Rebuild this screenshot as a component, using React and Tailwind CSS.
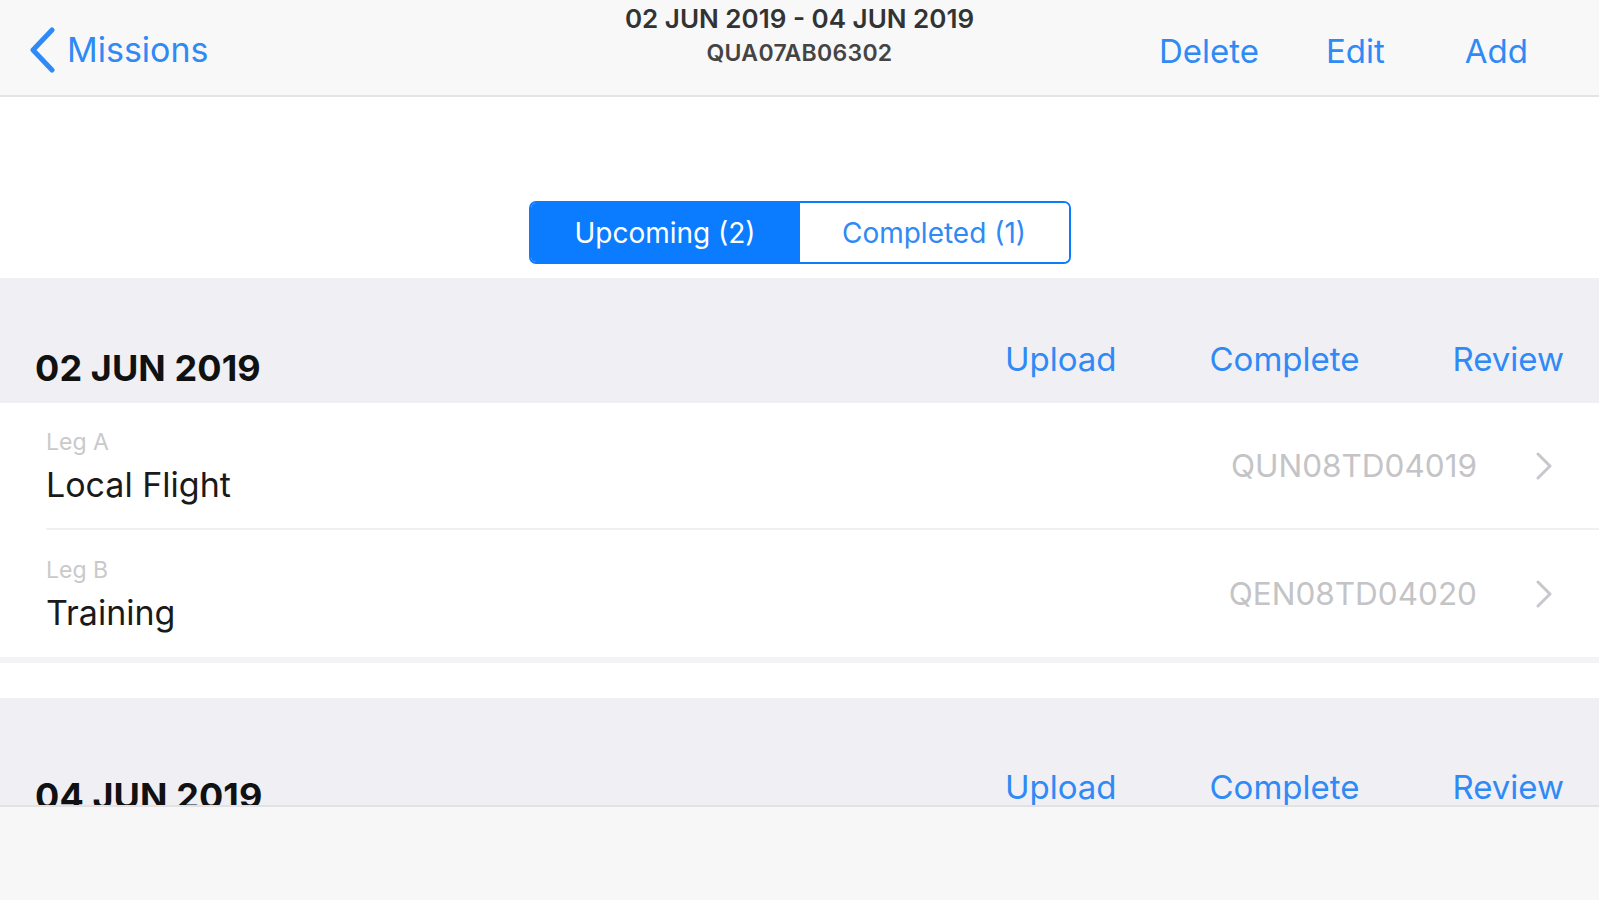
const legs = [
  { leg: "Leg A", name: "Local Flight", code: "QUN08TD04019" },
  { leg: "Leg B", name: "Training", code: "QEN08TD04020" },
];

const SectionHeader = ({ date }) => (
  <div className="h-[125px] bg-[#efeff4] flex items-end justify-between pl-[35px] pr-[35px] pb-[17px]">
    <h2 className="text-[36px] font-bold text-[#111] leading-none tracking-[0.1px]">
      {date}
    </h2>
    <div className="flex items-end gap-[93px] pb-[10px] text-[33px] text-[#2f8af5] leading-none">
      <button>Upload</button>
      <button>Complete</button>
      <button>Review</button>
    </div>
  </div>
);

const LegRow = ({ item, last }) => (
  <div className="pl-[46px] bg-white">
    <div
      className={`h-[127px] flex items-center pr-[46px] ${last ? "" : "border-b-2 border-[#f0f0f2]"}`}
    >
      <div className="flex-1 flex flex-col pt-[2px]">
        <span className="text-[23px] text-[#c9c9cc] leading-none mb-[14px]">
          {item.leg}
        </span>
        <span className="text-[34px] text-[#1a1a1a] leading-none">
          {item.name}
        </span>
      </div>
      <span className="text-[31.5px] text-[#c4c4c7] leading-none mr-[58px]">
        {item.code}
      </span>
      <svg width="18" height="28" viewBox="0 0 18 28" fill="none">
        <path
          d="M3 2 L15 14 L3 26"
          stroke="#c7c7cc"
          strokeWidth="3"
          strokeLinecap="round"
          strokeLinejoin="round"
        />
      </svg>
    </div>
  </div>
);

export default function App() {
  return (
    <div
      className="w-[1599px] h-[900px] flex flex-col bg-white overflow-hidden"
      style={{ fontFamily: "Inter, 'Liberation Sans', sans-serif" }}
    >
      {/* Nav bar */}
      <header className="h-[97px] shrink-0 bg-[#f8f8f8] border-b-2 border-[#e4e4e6] grid grid-cols-[1fr_auto_1fr]">
        <div className="flex items-center pl-[28px] pt-[5px]">
          <button className="flex items-center gap-[11px] text-[#2f8af5]">
            <svg width="28" height="46" viewBox="0 0 28 46" fill="none">
              <path
                d="M24 3 L5 23 L24 43"
                stroke="currentColor"
                strokeWidth="5"
                strokeLinecap="round"
                strokeLinejoin="round"
              />
            </svg>
            <span className="text-[34px] leading-none">Missions</span>
          </button>
        </div>
        <div className="flex flex-col items-center pt-[6px]">
          <span className="text-[26px] font-semibold text-[#333] leading-none">
            02 JUN 2019 - 04 JUN 2019
          </span>
          <span className="text-[23px] font-semibold text-[#444] leading-none mt-[10px] tracking-[0.3px]">
            QUA07AB06302
          </span>
        </div>
        <div className="flex items-center justify-end pr-[71px] text-[33px] text-[#2f8af5] leading-none pt-[7px]">
          <button className="mr-[67px]">Delete</button>
          <button className="mr-[80px]">Edit</button>
          <button>Add</button>
        </div>
      </header>

      {/* Content */}
      <main className="flex-1 overflow-hidden">
        <div className="h-[181px] flex justify-center pt-[104px] bg-white">
          <div className="flex h-[63px] w-[542px] rounded-[7px] border-2 border-[#0b7cff] overflow-hidden">
            <button className="flex-1 bg-[#0b7cff] text-white text-[28px]">
              Upcoming (2)
            </button>
            <button className="flex-1 bg-white text-[#2f8af5] text-[28px]">
              Completed (1)
            </button>
          </div>
        </div>

        <SectionHeader date="02 JUN 2019" />
        {legs.map((item, i) => (
          <LegRow key={item.code} item={item} last={i === legs.length - 1} />
        ))}
        <div className="h-[6px] bg-[#f3f3f5]" />
        <div className="h-[35px] bg-white" />
        <div className="pt-[8px] bg-[#efeff4]">
          <SectionHeader date="04 JUN 2019" />
        </div>
      </main>

      {/* Bottom toolbar */}
      <footer className="h-[95px] shrink-0 bg-[#f7f7f7] border-t-2 border-[#e2e2e4]" />
    </div>
  );
}
